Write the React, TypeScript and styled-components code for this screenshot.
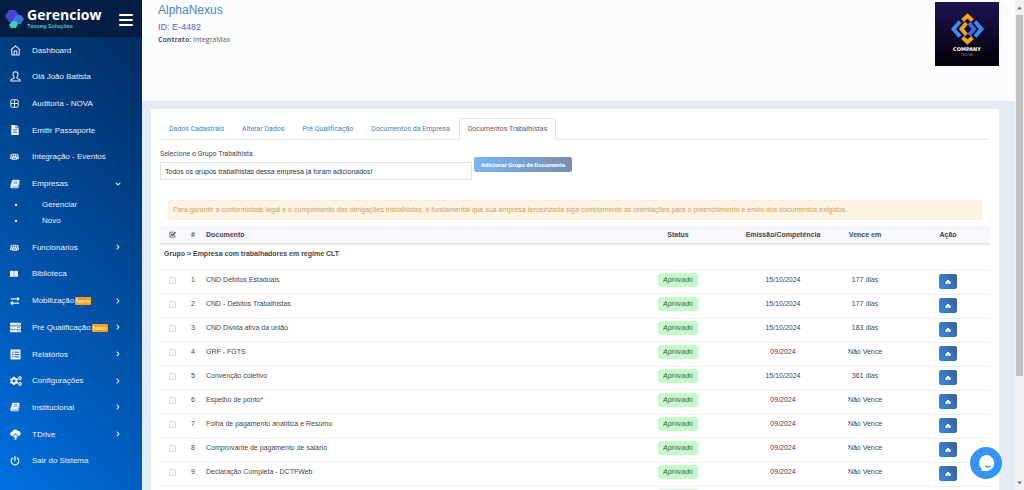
import React from "react";
import styled, { createGlobalStyle } from "styled-components";
import { FaFileAlt, FaServer, FaCogs, FaChevronRight, FaChevronDown } from "react-icons/fa";

const mainFont = `"Liberation Sans", Arial, sans-serif`;
const formFont = `Roboto, "Liberation Sans", sans-serif`;

const GlobalStyle = createGlobalStyle`
  *, *::before, *::after { box-sizing: border-box; }
  body { margin: 0; background: #e6eaf2; font-family: ${mainFont}; font-size: 7px; color: #43464c; }
  ul { list-style: none; margin: 0; padding: 0; }
  a { text-decoration: none; color: inherit; }
  h1, h2, p { margin: 0; font-weight: 400; }
  button { border: 0; padding: 0; font-family: inherit; cursor: pointer; }
`;

const Shell = styled.div`
  display: grid;
  grid-template-columns: 142px minmax(0, 1fr) 9px;
  height: 100vh;
  overflow: hidden;
`;

/* ---------- sidebar ---------- */

const Sidebar = styled.aside`
  display: flex;
  flex-direction: column;
  min-height: 0;
  color: #e9f0f9;
  background: linear-gradient(45deg, #0070e0 0%, #00285a 100%);
`;

const Brand = styled.div`
  display: flex;
  align-items: center;
  justify-content: space-between;
  flex: none;
  height: 37px;
  padding: 0 9px 0 5px;
  background: #041d42;
`;

const BrandLink = styled.a`
  display: flex;
  align-items: center;
  gap: 3px;
  font-family: "Open Sans", "Noto Sans", sans-serif;
  font-weight: 700;
`;

const BrandName = styled.span`
  display: block;
  font-size: 14px;
  line-height: 14px;
  color: #fff;
`;

const BrandTagline = styled.span`
  display: block;
  font-family: ${formFont};
  font-size: 6px;
  line-height: 8px;
  color: #2fc3b5;
`;

const MenuToggle = styled.button`
  display: flex;
  flex-direction: column;
  justify-content: space-between;
  width: 14px;
  height: 12px;
  margin-top: 3px;
  background: none;
`;

const ToggleBar = styled.span`
  height: 2px;
  width: 100%;
  border-radius: 1px;
  background: #fff;
`;

const Menu = styled.ul`
  display: flex;
  flex: 1;
  flex-direction: column;
  justify-content: space-between;
  gap: 8px;
  && { padding: 5px 21px 21px 10px; }
`;

const MenuLink = styled.a`
  display: grid;
  grid-template-columns: 12px minmax(0, 1fr) 6px;
  column-gap: 10px;
  align-items: center;
  height: 16px;
  font-size: 8px;
  white-space: nowrap;
`;

const MenuIcon = styled.span<{ $size: number }>`
  display: flex;
  svg { width: ${(p) => p.$size}px; height: ${(p) => p.$size}px; }
`;

const Chevron = styled.span`
  display: flex;
  svg { width: 6px; height: 6px; }
`;

const NewTag = styled.span`
  display: inline-block;
  margin-left: 1px;
  padding: 0 1px;
  border-radius: 1px;
  background: #f9a11b;
  color: #fff;
  font-size: 6px;
  line-height: 8px;
`;

const SubMenu = styled.ul`
  && { padding-top: 5px; }
`;

const SubLink = styled.a`
  display: grid;
  grid-template-columns: 27px 1fr;
  align-items: center;
  height: 16px;
  padding-left: 5px;
  font-size: 8px;

  &::before {
    content: "";
    width: 2px;
    height: 2px;
    background: #e9f0f9;
  }
`;

const HomeIcon = () => (
  <svg viewBox="0 0 24 24" fill="none" stroke="currentColor" strokeWidth="2.2" strokeLinejoin="round">
    <path d="M2 10.500 12 2l10 8.500M4 9.500V22h16V9.500M9 22v-9h6v9" />
  </svg>
);

const PersonIcon = () => (
  <svg viewBox="0 0 24 24" fill="none" stroke="currentColor" strokeWidth="2.2" strokeLinejoin="round">
    <path d="M12 1.500c3.500 0 5.500 2.500 5.500 6 0 2.500-1 4.500-2.500 5.800v2.200l7 3.500v3H2v-3l7-3.500v-2.200C7.500 12 6.500 10 6.500 7.500c0-3.500 2-6 5.500-6Z" />
  </svg>
);

const GridIcon = () => (
  <svg viewBox="0 0 24 24" fill="none" stroke="currentColor" strokeWidth="2.6">
    <rect x="2" y="2" width="20" height="20" rx="4" />
    <path d="M12 3v18M3 12h18" />
  </svg>
);

const TeamIcon = () => (
  <svg viewBox="0 0 24 24" fill="none" stroke="currentColor" strokeWidth="2.8">
    <circle cx="12" cy="9" r="3.500" />
    <path d="M6 19v-2c0-2.500 2-4 6-4s6 1.500 6 4v2ZM7 6.500a3 3 0 1 0-1 5.500M17 6.500a3 3 0 1 1 1 5.500M4 17H1.500v-2c0-1.500 1-2.500 3-3M20 17h2.500v-2c0-1.500-1-2.500-3-3" />
  </svg>
);

const BookIcon = () => (
  <svg viewBox="0 0 24 24">
    <path d="M8 2h13c1.500 0 2.300 1 2 2.500L19.500 17c-.300 1-1 1.500-2 1.500H5c-1 0-1.200 1.500 0 1.500h13c1 0 1.700-.500 2-1.500L23.500 7c.700.800.500 1.700.300 2.500L21 20c-.400 1.400-1.300 2-2.700 2H4C1.500 22 0 20 .7 17.500L4.800 4.200C5.300 2.700 6.500 2 8 2Z" fill="currentColor" />
    <path d="M9.500 6.500h9M8.500 10h9" stroke="#0a58ad" strokeWidth="1.2" />
  </svg>
);

const OpenBookIcon = () => (
  <svg viewBox="0 0 24 24" fill="currentColor">
    <path d="M0 3.500c4-1.500 8-1.500 11.500 0V21c-3.500-1.200-7.500-1.200-11.500 0ZM12.500 3.500c3.500-1.500 7.500-1.500 11.500 0V21c-4-1.200-8-1.200-11.500 0Z" />
  </svg>
);

const SwapIcon = () => (
  <svg viewBox="0 0 24 24" fill="currentColor">
    <path d="M2 5.500h15V1.500l7 5.500-7 5.500v-4H2ZM22 15.500H7v-4L0 17l7 5.500v-4h15Z" />
  </svg>
);

const ListIcon = () => (
  <svg viewBox="0 0 24 24">
    <rect x="1" y="1" width="22" height="22" rx="1.500" fill="currentColor" />
    <path d="M4.500 7h3M10 7h10M4.500 12h3M10 12h10M4.500 17h3M10 17h10" stroke="#0a58ad" strokeWidth="2" />
  </svg>
);

const CloudUpIcon = () => (
  <svg viewBox="0 0 24 24" fill="currentColor">
    <path d="M5 15a4.500 4.500 0 0 1-.5-9A7 7 0 0 1 17 4.500a5.300 5.300 0 0 1 2 10.500h-1.500L12 9l-5.500 6ZM12 11.500l6 6.500h-4v5.500h-4V18H6Z" />
  </svg>
);

const PowerIcon = () => (
  <svg viewBox="0 0 24 24" fill="none" stroke="currentColor" strokeWidth="3.2" strokeLinecap="round">
    <path d="M12 2v9M6.500 5a9 9 0 1 0 11 0" />
  </svg>
);

const CloudIcon = () => (
  <svg viewBox="0 0 24 24">
    <path d="M5 20a5 5 0 0 1-.500-9.500A7 7 0 0 1 18 9a5.600 5.600 0 0 1 1 11Z" fill="currentColor" />
    <path d="m12 13 3 3.500h-2v2.500h-2v-2.500H9Z" fill="#36689f" />
  </svg>
);

const TickBoxIcon = () => (
  <svg viewBox="0 0 24 24" fill="none" stroke="currentColor">
    <path d="M20 13v8H3V4h13" strokeWidth="2.5" />
    <path d="m7 10 5 5L22 4" strokeWidth="4.5" />
  </svg>
);

type Item = {
  label: string;
  icon: React.ReactNode;
  size: number;
  isNew?: boolean;
  more?: boolean;
  children?: string[];
};

const items: Item[] = [
  { label: "Dashboard", icon: <HomeIcon />, size: 11 },
  { label: "Olá João Batista", icon: <PersonIcon />, size: 11 },
  { label: "Auditoria - NOVA", icon: <GridIcon />, size: 9 },
  { label: "Emitir Passaporte", icon: <FaFileAlt />, size: 10 },
  { label: "Integração - Eventos", icon: <TeamIcon />, size: 9 },
  { label: "Empresas", icon: <BookIcon />, size: 10, children: ["Gerenciar", "Novo"] },
  { label: "Funcionários", icon: <TeamIcon />, size: 9, more: true },
  { label: "Biblioteca", icon: <OpenBookIcon />, size: 8 },
  { label: "Mobilização", icon: <SwapIcon />, size: 10, isNew: true, more: true },
  { label: "Pré Qualificação", icon: <FaServer />, size: 11, isNew: true, more: true },
  { label: "Relatórios", icon: <ListIcon />, size: 11, more: true },
  { label: "Configurações", icon: <FaCogs />, size: 12, more: true },
  { label: "Institucional", icon: <BookIcon />, size: 10, more: true },
  { label: "TDrive", icon: <CloudUpIcon />, size: 11, more: true },
  { label: "Sair do Sistema", icon: <PowerIcon />, size: 10 },
];

/* ---------- main column ---------- */

const Content = styled.main`
  min-width: 0;
  overflow: hidden;
`;

const CompanyHeader = styled.header`
  display: flex;
  justify-content: space-between;
  align-items: flex-start;
  height: 101px;
  padding: 2px 16px 0;
  background: #fbfcfe;
`;

const CompanyName = styled.h1`
  font-size: 12px;
  line-height: 17px;
  color: #4b86b9;
`;

const CompanyId = styled.h2`
  font-size: 9px;
  line-height: 17px;
  color: #6357dc;
`;

const Contract = styled.p`
  font-family: "Open Sans", "Noto Sans", sans-serif;
  font-size: 7px;
  line-height: 8px;
  color: #5a5c62;
`;

const CompanyLogo = styled.svg`
  flex: none;
  width: 64px;
  height: 64px;
`;

const Card = styled.section`
  margin: 8px 16px 0 9px;
  padding: 9px 9px 16px;
  border-radius: 2px;
  background: #fff;
`;

const Tabs = styled.nav`
  display: flex;
  border-bottom: 1px solid #e8eaed;
  font-family: ${formFont};
`;

const Tab = styled.a<{ $active?: boolean }>`
  margin-bottom: -1px;
  padding: 0 8px;
  border: 1px solid ${(p) => (p.$active ? "#e2e4e8" : "transparent")};
  border-bottom-color: ${(p) => (p.$active ? "#fff" : "transparent")};
  border-radius: 2px 2px 0 0;
  color: ${(p) => (p.$active ? "#5b5e63" : "#4a83b3")};
  line-height: 20px;
  white-space: nowrap;
`;

const GroupForm = styled.form`
  display: flex;
  align-items: flex-start;
  gap: 2px;
  padding-top: 8px;
  font-family: ${formFont};
`;

const Field = styled.div`
  display: flex;
  flex: 0 1 312px;
  flex-direction: column;
  gap: 2px;
`;

const FieldLabel = styled.label`
  line-height: 12px;
`;

const GroupInput = styled.input`
  height: 18px;
  padding: 0 4px;
  border: 1px solid #dfe2e6;
  border-radius: 0;
  background: #fff;
  color: #2f3237;
  font: 7px ${mainFont};
`;

const AddButton = styled.button`
  height: 15px;
  margin-top: 9px;
  padding: 0 7px;
  border-radius: 2px;
  background: linear-gradient(90deg, #79b6f4, #7c8ca9);
  color: #fff;
  font-size: 6px;
  font-weight: 700;
  white-space: nowrap;
`;

const Notice = styled.p`
  margin: 20px 8px 6px;
  padding: 0 4px;
  border: 1px solid #faeed6;
  border-radius: 2px;
  background: #fcf3e2;
  color: #cba45a;
  line-height: 18px;
`;

const DocTable = styled.table`
  width: 100%;
  border-collapse: separate;
  border-spacing: 0;
  table-layout: fixed;
`;

const Th = styled.th<{ $left?: boolean }>`
  height: 19px;
  padding: 0 0 0 ${(p) => (p.$left ? 4 : 0)}px;
  border-bottom: 2px solid #e7e9eb;
  background: #f7f8fb;
  font-weight: 700;
  line-height: 14px;
  text-align: ${(p) => (p.$left ? "left" : "center")};
  svg { display: block; width: 7px; height: 7px; margin: 0 auto; }
`;

const GroupCell = styled.td`
  height: 25px;
  padding: 2px 4px;
  font-weight: 700;
  line-height: 14px;
  vertical-align: top;
`;

const Td = styled.td<{ $left?: boolean; $top?: number }>`
  height: 24px;
  padding: ${(p) => p.$top ?? 2}px 0 0 ${(p) => (p.$left ? 4 : 0)}px;
  border-top: 1px solid #eceef0;
  line-height: 14px;
  text-align: ${(p) => (p.$left ? "left" : "center")};
  vertical-align: top;
`;

const Check = styled.input`
  appearance: none;
  display: block;
  width: 7px;
  height: 7px;
  margin: 0 auto;
  border: 1px solid #d6d8db;
  border-radius: 1px;
  background: #f8f8f8;
`;

const Status = styled.span`
  display: block;
  width: 40px;
  margin: 0 auto;
  border-radius: 3px;
  background: #c5fbcb;
  font-style: italic;
  color: #3f5a44;
`;

const UploadButton = styled.button`
  display: flex;
  align-items: center;
  justify-content: center;
  width: 18px;
  height: 15px;
  margin: 0 auto;
  border-radius: 2px;
  background: linear-gradient(60deg, #338eea, #3d5a8c);
  color: #fff;
  svg { width: 6px; height: 6px; }
`;

const ChatButton = styled.button`
  position: fixed;
  right: 22px;
  bottom: 11px;
  width: 32px;
  height: 32px;
  border-radius: 50%;
  background: #3496f4;
  svg { display: block; width: 32px; height: 32px; }
`;

const ScrollTrack = styled.div`
  display: grid;
  grid-template-rows: 15px minmax(0, 361fr) minmax(0, 99fr) 15px;
  justify-items: center;
  align-items: center;
  background: #f1f1f1;
  svg { width: 5px; height: 4px; }
`;

const ScrollThumb = styled.div`
  width: 7px;
  height: 100%;
  background: #c1c1c1;
`;

const tabs = ["Dados Cadastrais", "Alterar Dados", "Pré Qualificação", "Documentos da Empresa", "Documentos Trabalhistas"];

const docs = [
  ["CND Débitos Estaduais", "15/10/2024", "177 dias"],
  ["CND - Débitos Trabalhistas", "15/10/2024", "177 dias"],
  ["CND Divida ativa da união", "15/10/2024", "183 dias"],
  ["GRF - FGTS", "09/2024", "Não Vence"],
  ["Convenção coletivo", "15/10/2024", "361 dias"],
  ["Espelho de ponto*", "09/2024", "Não Vence"],
  ["Folha de pagamento analítica e Resumo", "09/2024", "Não Vence"],
  ["Comprovante de pagamento de salário", "09/2024", "Não Vence"],
  ["Declaração Completa - DCTFWeb", "09/2024", "Não Vence"],
];

const SideNav = () => (
  <Sidebar>
    <Brand>
      <BrandLink href="#">
        <svg width="19" height="20" viewBox="0 0 19 20">
          <path d="M4 1h6l4 5-3 7H4L0 7Z" fill="#4a3fd6" />
          <path d="M11 6h5l3 4-3 5h-5l-3-4Z" fill="#3b82e6" opacity=".9" />
          <path d="M7 12h4l2 3-2 4H6l-2-3Z" fill="#35d3bd" />
        </svg>
        <span>
          <BrandName>Gerenciow</BrandName>
          <BrandTagline>Tesseg Soluções</BrandTagline>
        </span>
      </BrandLink>
      <MenuToggle type="button" aria-label="Menu">
        <ToggleBar />
        <ToggleBar />
        <ToggleBar />
      </MenuToggle>
    </Brand>
    <Menu>
      {items.map((item) => (
        <li key={item.label}>
          <MenuLink href="#">
            <MenuIcon $size={item.size}>{item.icon}</MenuIcon>
            <span>
              {item.label}
              {item.isNew && <NewTag>Novo</NewTag>}
            </span>
            <Chevron>
              {item.more && <FaChevronRight />}
              {item.children && <FaChevronDown />}
            </Chevron>
          </MenuLink>
          {item.children && (
            <SubMenu>
              {item.children.map((child) => (
                <li key={child}>
                  <SubLink href="#">{child}</SubLink>
                </li>
              ))}
            </SubMenu>
          )}
        </li>
      ))}
    </Menu>
  </Sidebar>
);

const Logo = () => (
  <CompanyLogo viewBox="0 0 64 64" role="img" aria-label="Company">
    <defs>
      <linearGradient id="night" x1="0" y1="0" x2="0" y2="1">
        <stop offset="0" stopColor="#1d1250" />
        <stop offset="1" stopColor="#020108" />
      </linearGradient>
    </defs>
    <rect width="64" height="64" fill="url(#night)" />
    <g fill="none" strokeWidth="4">
      <path d="m27.500 18.500 5-4.500 5 4.500" stroke="#f7a11a" />
      <path d="m27.500 35.500 5 4.500 5-4.500" stroke="#f7a11a" />
      <path d="m25 19.500-6.500 7.500 6.500 7.500" stroke="#3a8cf0" />
      <path d="m40 19.500 6.500 7.500-6.500 7.500" stroke="#3a8cf0" />
      <path d="M31.500 21 26.500 27l5 6" stroke="#f7a11a" />
      <path d="m34 21 5 6-5 6" stroke="#3f6be0" />
    </g>
    <text x="32" y="49" fill="#fff" fontFamily="DejaVu Sans, sans-serif" fontSize="5" fontWeight="700" textAnchor="middle">COMPANY</text>
    <text x="32" y="54" fill="#8b8b95" fontFamily="Inter, sans-serif" fontSize="3" textAnchor="middle">TAGLINE</text>
  </CompanyLogo>
);

export default function App() {
  return (
    <>
      <GlobalStyle />
      <Shell>
        <SideNav />
        <Content>
          <CompanyHeader>
            <div>
              <CompanyName>AlphaNexus</CompanyName>
              <CompanyId>ID: E-4482</CompanyId>
              <Contract>
                <b>Contrato:</b> IntegraMax
              </Contract>
            </div>
            <Logo />
          </CompanyHeader>
          <Card>
            <Tabs>
              {tabs.map((tab, i) => (
                <Tab key={tab} href="#" $active={i === tabs.length - 1}>
                  {tab}
                </Tab>
              ))}
            </Tabs>
            <GroupForm>
              <Field>
                <FieldLabel htmlFor="group">Selecione o Grupo Trabalhista</FieldLabel>
                <GroupInput id="group" readOnly value="Todos os grupos trabalhistas dessa empresa já foram adicionados!" />
              </Field>
              <AddButton type="button">Adicionar Grupo de Documento</AddButton>
            </GroupForm>
            <Notice>
              Para garantir a conformidade legal e o cumprimento das obrigações trabalhistas, é fundamental que sua empresa
              terceirizada siga corretamente as orientações para o preenchimento e envio dos documentos exigidos.
            </Notice>
            <DocTable>
              <colgroup>
                <col style={{ width: 24 }} />
                <col style={{ width: 18 }} />
                <col />
                <col style={{ width: 128 }} />
                <col style={{ width: 82 }} />
                <col style={{ width: 82 }} />
                <col style={{ width: 84 }} />
              </colgroup>
              <thead>
                <tr>
                  <Th>
                    <TickBoxIcon />
                  </Th>
                  <Th>#</Th>
                  <Th $left>Documento</Th>
                  <Th>Status</Th>
                  <Th>Emissão/Competência</Th>
                  <Th>Vence em</Th>
                  <Th>Ação</Th>
                </tr>
              </thead>
              <tbody>
                <tr>
                  <GroupCell colSpan={7}>Grupo &gt; Empresa com trabalhadores em regime CLT</GroupCell>
                </tr>
                {docs.map(([name, issued, due], i) => (
                  <tr key={name}>
                    <Td $top={6}>
                      <Check type="checkbox" aria-label={name} />
                    </Td>
                    <Td>{i + 1}</Td>
                    <Td $left>{name}</Td>
                    <Td>
                      <Status>Aprovado</Status>
                    </Td>
                    <Td>{issued}</Td>
                    <Td>{due}</Td>
                    <Td $top={3}>
                      <UploadButton type="button" aria-label={`Enviar ${name}`}>
                        <CloudIcon />
                      </UploadButton>
                    </Td>
                  </tr>
                ))}
                <tr>
                  <Td colSpan={3} />
                  <Td>
                    <Status>&nbsp;</Status>
                  </Td>
                  <Td colSpan={3} />
                </tr>
              </tbody>
            </DocTable>
          </Card>
        </Content>
        <ScrollTrack aria-hidden="true">
          <svg viewBox="0 0 10 8"><path d="M5 1l4 6H1z" fill="#666" /></svg>
          <ScrollThumb />
          <span />
          <svg viewBox="0 0 10 8"><path d="M5 7l4-6H1z" fill="#666" /></svg>
        </ScrollTrack>
      </Shell>
      <ChatButton type="button" aria-label="Chat">
        <svg viewBox="0 0 32 32">
          <path d="M16 8a8 8 0 1 1-1 15.900l-4 .100 1-2A8 8 0 0 1 16 8Z" fill="#fff" />
          <path d="M15.500 19q2 2 5 0" fill="none" stroke="#3496f4" strokeWidth="1.5" />
        </svg>
      </ChatButton>
    </>
  );
}
